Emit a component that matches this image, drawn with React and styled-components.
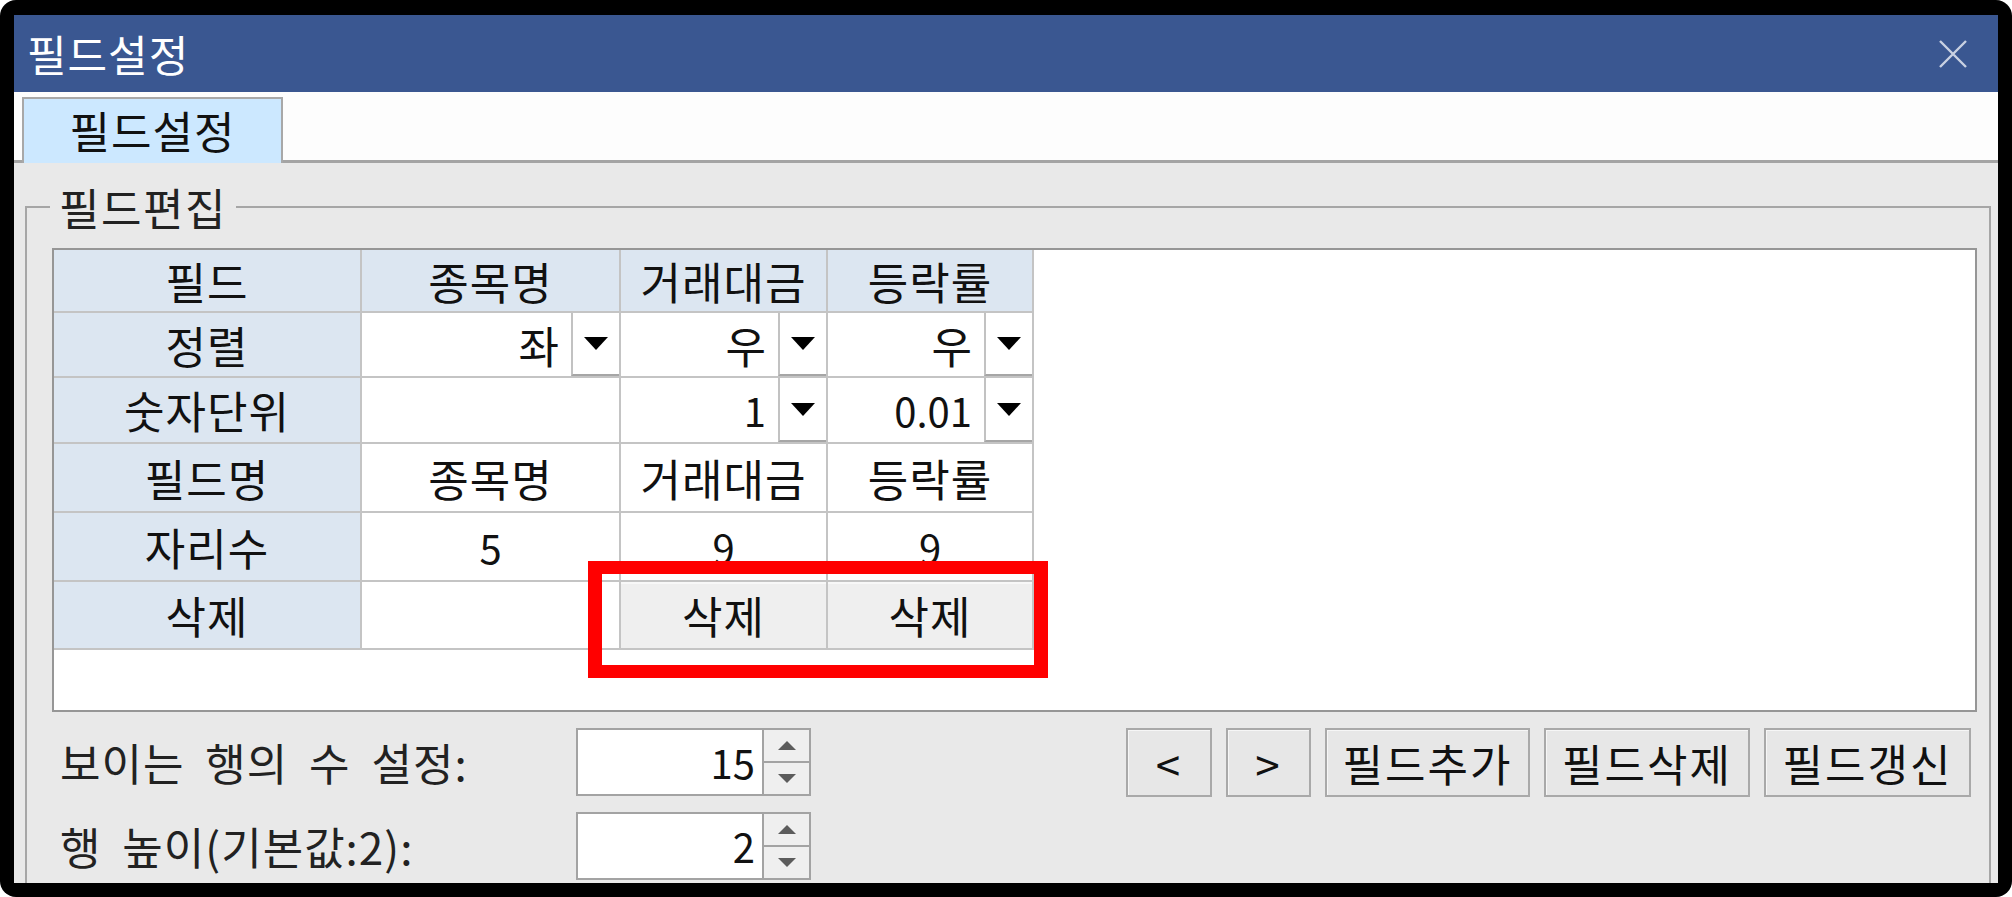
import React from 'react'
import styled, { createGlobalStyle } from 'styled-components'

const GlobalStyle = createGlobalStyle`
  html, body {
    margin: 0;
    padding: 0;
    background: #fff;
  }
  body {
    font-family: "Noto Sans CJK KR", "Noto Sans", sans-serif;
    color: #111;
  }
  * {
    box-sizing: border-box;
  }
`

const columns = [306, 257, 205, 204]
const rowHeights = [61, 63, 64, 67, 67, 66]

const fields = [
  { name: '종목명', align: '좌', unit: null, digits: 5, removable: false },
  { name: '거래대금', align: '우', unit: '1', digits: 9, removable: true },
  { name: '등락률', align: '우', unit: '0.01', digits: 9, removable: true },
]

const buttons = [
  { label: '<', w: 86 },
  { label: '>', w: 85 },
  { label: '필드추가', w: 205 },
  { label: '필드삭제', w: 206 },
  { label: '필드갱신', w: 207 },
]

export default function App() {
  return (
    <>
      <GlobalStyle />
      <Frame>
        <Window>
          <TitleBar>
            <span>필드설정</span>
            <svg width="30" height="30" viewBox="0 0 30 30">
              <path d="M2 2 L28 28 M28 2 L2 28" stroke="#c9d1e2" strokeWidth="2.4" fill="none" />
            </svg>
          </TitleBar>
          <TabStrip>
            <Tab>필드설정</Tab>
          </TabStrip>
          <Content>
            <GroupBox>
              <Legend>필드편집</Legend>
              <TableBox>
                <Grid>
                  <Cell $tone="head">필드</Cell>
                  {fields.map((f) => (
                    <Cell key={'h' + f.name} $tone="head">{f.name}</Cell>
                  ))}

                  <Cell $tone="head">정렬</Cell>
                  {fields.map((f) => (
                    <DropCell key={'a' + f.name}>
                      <DropValue>{f.align}</DropValue>
                      <DropButton><Arrow /></DropButton>
                    </DropCell>
                  ))}

                  <Cell $tone="head">숫자단위</Cell>
                  {fields.map((f) =>
                    f.unit ? (
                      <DropCell key={'u' + f.name}>
                        <DropValue $num>{f.unit}</DropValue>
                        <DropButton><Arrow /></DropButton>
                      </DropCell>
                    ) : (
                      <Cell key={'u' + f.name} />
                    )
                  )}

                  <Cell $tone="head">필드명</Cell>
                  {fields.map((f) => (
                    <Cell key={'n' + f.name}>{f.name}</Cell>
                  ))}

                  <Cell $tone="head">자리수</Cell>
                  {fields.map((f) => (
                    <Cell key={'d' + f.name} $num>{f.digits}</Cell>
                  ))}

                  <Cell $tone="head">삭제</Cell>
                  {fields.map((f) => (
                    <Cell key={'r' + f.name} $tone={f.removable ? 'button' : undefined}>
                      {f.removable ? '삭제' : ''}
                    </Cell>
                  ))}
                </Grid>
              </TableBox>

              <Controls>
                <Settings>
                  <SettingRow>
                    <SettingLabel>보이는 행의 수 설정:</SettingLabel>
                    <Spin>
                      <SpinValue>15</SpinValue>
                      <SpinButtons>
                        <SpinBtn><SpinArrow $up /></SpinBtn>
                        <SpinBtn><SpinArrow /></SpinBtn>
                      </SpinButtons>
                    </Spin>
                  </SettingRow>
                  <SettingRow>
                    <SettingLabel>행 높이(기본값:2):</SettingLabel>
                    <Spin>
                      <SpinValue>2</SpinValue>
                      <SpinButtons>
                        <SpinBtn><SpinArrow $up /></SpinBtn>
                        <SpinBtn><SpinArrow /></SpinBtn>
                      </SpinButtons>
                    </Spin>
                  </SettingRow>
                </Settings>
                <ButtonRow>
                  {buttons.map((b) => (
                    <Button key={b.label} $w={b.w}>{b.label}</Button>
                  ))}
                </ButtonRow>
              </Controls>
            </GroupBox>
          </Content>
        </Window>
        <Highlight />
      </Frame>
    </>
  )
}

const Frame = styled.div`
  position: relative;
  width: 2012px;
  height: 897px;
  background: #000;
  border-radius: 16px;
  padding: 15px 14px 14px 14px;
`

const Window = styled.div`
  height: 100%;
  background: #e9e9e9;
  display: flex;
  flex-direction: column;
  overflow: hidden;
`

const TitleBar = styled.div`
  height: 77px;
  flex: none;
  background: #3a5791;
  color: #fff;
  font-size: 43px;
  line-height: 1;
  letter-spacing: 1px;
  display: flex;
  align-items: center;
  justify-content: space-between;
  padding: 0 30px 0 13px;
`

const TabStrip = styled.div`
  height: 71px;
  flex: none;
  background: #fdfdfd;
  border-bottom: 3px solid #a4a4a4;
  display: flex;
  align-items: flex-end;
`

const Tab = styled.div`
  width: 261px;
  height: 66px;
  margin: 0 0 -3px 8px;
  background: #cce8ff;
  border: 2px solid #a8a8a8;
  border-bottom: none;
  font-size: 44px;
  line-height: 1;
  letter-spacing: 1px;
  display: flex;
  align-items: center;
  justify-content: center;
  padding-bottom: 2px;
`

const Content = styled.div`
  flex: 1;
  padding: 0 7px 0 11px;
  display: flex;
  flex-direction: column;
`

const GroupBox = styled.fieldset`
  flex: 1;
  margin: 24px 0 0 0;
  padding: 0;
  min-width: 0;
  border: 2px solid #a6a6a6;
  border-bottom: none;
`

const Legend = styled.legend`
  margin-left: 23px;
  padding: 0 9px;
  font-size: 44px;
  line-height: 40px;
  letter-spacing: 1.5px;
  color: #222;
`

const TableBox = styled.div`
  height: 464px;
  margin: 21px 12px 0 25px;
  background: #fff;
  border: 2px solid #969696;
`

const Grid = styled.div`
  display: grid;
  grid-template-columns: ${columns.map((c) => c + 'px').join(' ')};
  grid-template-rows: ${rowHeights.map((r) => r + 'px').join(' ')};
  gap: 2px;
  padding: 0 2px 2px 0;
  width: max-content;
  background: #c4c4c4;
`

const toneBg = {
  head: '#dce6f1',
  button: '#efefef',
}

const Cell = styled.div`
  background: ${(p) => toneBg[p.$tone] || '#fff'};
  font-size: ${(p) => (p.$num ? 40 : 44)}px;
  letter-spacing: ${(p) => (p.$num ? 0 : 1)}px;
  line-height: 1;
  display: flex;
  align-items: center;
  justify-content: center;
  white-space: nowrap;
  box-shadow: ${(p) => (p.$tone === 'button' ? 'inset 0 2px 0 #f8f8f8' : 'none')};
`

const DropCell = styled.div`
  background: #fff;
  display: flex;
  align-items: stretch;
`

const DropValue = styled.div`
  flex: 1;
  font-size: ${(p) => (p.$num ? 40 : 44)}px;
  line-height: 1;
  display: flex;
  align-items: center;
  justify-content: flex-end;
  padding-right: 12px;
`

const DropButton = styled.div`
  width: 48px;
  background: #fff;
  border-left: 2px solid #c2c2c2;
  border-bottom: 2px solid #a6a6a6;
  display: flex;
  align-items: center;
  justify-content: center;
`

const Arrow = styled.span`
  width: 0;
  height: 0;
  border-left: 12px solid transparent;
  border-right: 12px solid transparent;
  border-top: 13px solid #000;
`

const Controls = styled.div`
  margin-top: 16px;
  padding: 0 18px 0 33px;
  display: flex;
  justify-content: space-between;
  align-items: flex-start;
`

const Settings = styled.div`
  display: flex;
  flex-direction: column;
  gap: 16px;
`

const SettingRow = styled.div`
  display: flex;
  align-items: center;
`

const SettingLabel = styled.div`
  width: 516px;
  font-size: 44px;
  line-height: 1;
  letter-spacing: 1px;
  color: #222;
  word-spacing: 10px;
  white-space: nowrap;
`

const Spin = styled.div`
  width: 235px;
  height: 68px;
  display: flex;
  border: 2px solid #a3a3a3;
  background: #fff;
`

const SpinValue = styled.div`
  flex: 1;
  font-size: 40px;
  line-height: 1;
  display: flex;
  align-items: center;
  justify-content: flex-end;
  padding-right: 7px;
`

const SpinButtons = styled.div`
  width: 47px;
  display: flex;
  flex-direction: column;
  border-left: 2px solid #a3a3a3;
`

const SpinBtn = styled.div`
  flex: 1;
  background: #efefef;
  display: flex;
  align-items: center;
  justify-content: center;
  & + & {
    border-top: 2px solid #a3a3a3;
  }
`

const SpinArrow = styled.span`
  width: 0;
  height: 0;
  border-left: 9px solid transparent;
  border-right: 9px solid transparent;
  ${(p) => (p.$up ? 'border-bottom: 9px solid #5c5c5c;' : 'border-top: 9px solid #5c5c5c;')}
`

const ButtonRow = styled.div`
  display: flex;
  gap: 14px;
`

const Button = styled.div`
  width: ${(p) => p.$w}px;
  height: 69px;
  background: #e7e7e7;
  border: 2px solid #a9a9a9;
  box-shadow: inset 1px 1px 0 #f6f6f6;
  font-size: 44px;
  line-height: 1;
  letter-spacing: 2px;
  display: flex;
  align-items: center;
  justify-content: center;
  color: #111;
`

const Highlight = styled.div`
  position: absolute;
  left: 588px;
  top: 561px;
  width: 460px;
  height: 117px;
  border-style: solid;
  border-color: #ff0000;
  border-width: 13px 14px;
  pointer-events: none;
`
